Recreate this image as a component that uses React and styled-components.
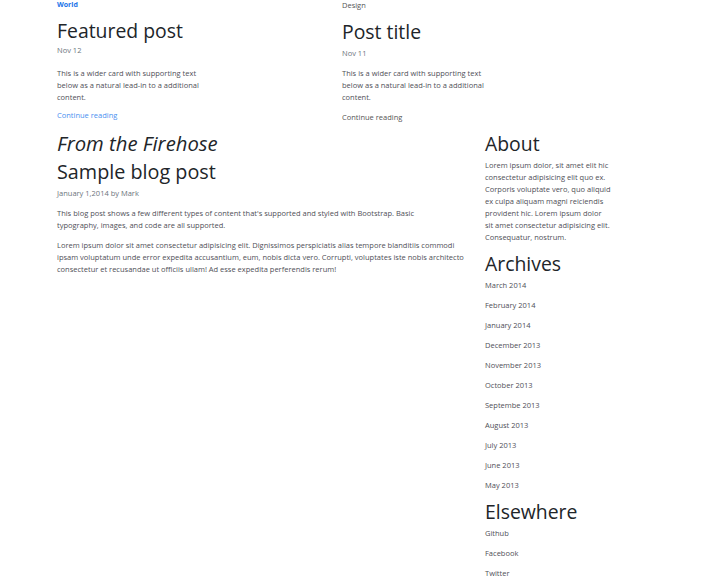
import React from "react";
import styled, { createGlobalStyle } from "styled-components";

const Global = createGlobalStyle`
  html, body { margin: 0; padding: 0; background: #fff; }
  body { font-family: "Open Sans", "Noto Sans", sans-serif; color: #212529; }
  * { box-sizing: border-box; }
`;

const Page = styled.div`
  padding: 0 0 0 57px;
  width: 713px;
`;

const TopRow = styled.div`
  display: grid;
  grid-template-columns: 285px 285px;
`;

const Card = styled.article`
  display: flex;
  flex-direction: column;
  align-items: flex-start;
  width: 160px;
`;

const Category = styled.a`
  font-size: ${(p) => (p.$strong ? "7px" : "7.5px")};
  line-height: ${(p) => (p.$strong ? "9px" : "10px")};
  font-weight: ${(p) => (p.$strong ? 700 : 400)};
  color: ${(p) => (p.$strong ? "#1a73e8" : "#555")};
  text-decoration: none;
`;

const CardTitle = styled.h3`
  margin: 9.5px 0 0;
  font-size: 19.4px;
  line-height: 23px;
  font-weight: 400;
  color: #212529;
  white-space: nowrap;
`;

const Meta = styled.div`
  margin-top: ${(p) => p.$mt ?? 4}px;
  font-size: 7.5px;
  line-height: 12px;
  color: #6c757d;
`;

const Text = styled.p`
  margin: ${(p) => p.$mt ?? 11}px 0 0;
  font-size: 7.5px;
  line-height: 12px;
  color: #4f4f57;
`;

const ReadMore = styled.a`
  margin-top: ${(p) => (p.$blue ? 6 : 8)}px;
  font-size: 7.5px;
  line-height: 12px;
  color: ${(p) => (p.$blue ? "#4a90f0" : "#555")};
  text-decoration: none;
`;

const BottomRow = styled.div`
  display: grid;
  grid-template-columns: 412px 132px;
  column-gap: 16px;
  margin-top: 9px;
  align-items: start;
`;

const Main = styled.main`
  display: flex;
  flex-direction: column;
`;

const SectionTitle = styled.h3`
  margin: 0;
  font-size: 20.3px;
  line-height: 23px;
  font-weight: 400;
  font-style: italic;
  color: #212529;
`;

const PostTitle = styled.h2`
  margin: 5px 0 0;
  font-size: 19.8px;
  line-height: 23px;
  font-weight: 400;
  color: #212529;
`;

const PostText = styled.p`
  margin: 8px 0 0;
  font-size: 7.5px;
  line-height: 12px;
  color: #4f4f57;
`;

const Sidebar = styled.aside`
  display: flex;
  flex-direction: column;
`;

const SideTitle = styled.h4`
  margin: ${(p) => (p.$first ? 0 : 9)}px 0 0;
  font-size: 19.4px;
  line-height: 23px;
  font-weight: 400;
  color: #212529;
`;

const SideText = styled.p`
  margin: 4px 0 0;
  font-size: 7.5px;
  line-height: 12px;
  color: #4f4f57;
`;

const LinkList = styled.ul`
  list-style: none;
  margin: 4px 0 0;
  padding: 0;
  display: flex;
  flex-direction: column;
  gap: 8px;
`;

const LinkItem = styled.li`
  font-size: 7.5px;
  line-height: 12px;
  color: #4f4f57;
`;

const Lines = ({ lines }) =>
  lines.map((l, i) => (
    <React.Fragment key={i}>
      {i > 0 && <br />}
      {l}
    </React.Fragment>
  ));

const archives = [
  "March 2014",
  "February 2014",
  "January 2014",
  "December 2013",
  "November 2013",
  "October 2013",
  "Septembe 2013",
  "August 2013",
  "July 2013",
  "June 2013",
  "May 2013",
];

const elsewhere = ["Github", "Facebook", "Twitter"];

const cardText =
  "This is a wider card with supporting text below as a natural lead-in to a additional content.";

export default function App() {
  return (
    <>
      <Global />
      <Page>
        <TopRow>
          <Card>
            <Category $strong>World</Category>
            <CardTitle>Featured post</CardTitle>
            <Meta $mt={2}>Nov 12</Meta>
            <Text>{cardText}</Text>
            <ReadMore $blue>Continue reading</ReadMore>
          </Card>
          <Card>
            <Category>Design</Category>
            <CardTitle>Post title</CardTitle>
            <Meta>Nov 11</Meta>
            <Text $mt={8}>{cardText}</Text>
            <ReadMore>Continue reading</ReadMore>
          </Card>
        </TopRow>
        <BottomRow>
          <Main>
            <SectionTitle>From the Firehose</SectionTitle>
            <PostTitle>Sample blog post</PostTitle>
            <Meta>January 1,2014 by Mark</Meta>
            <PostText>
              <Lines
                lines={[
                  "This blog post shows a few different types of content that's supported and styled with Bootstrap. Basic",
                  "typography, images, and code are all supported.",
                ]}
              />
            </PostText>
            <PostText>
              <Lines
                lines={[
                  "Lorem ipsum dolor sit amet consectetur adipisicing elit. Dignissimos perspiciatis alias tempore blanditiis commodi",
                  "ipsam voluptatum unde error expedita accusantium, eum, nobis dicta vero. Corrupti, voluptates iste nobis architecto",
                  "consectetur et recusandae ut officiis ullam! Ad esse expedita perferendis rerum!",
                ]}
              />
            </PostText>
          </Main>
          <Sidebar>
            <SideTitle $first>About</SideTitle>
            <SideText>
              <Lines
                lines={[
                  "Lorem ipsum dolor, sit amet elit hic",
                  "consectetur adipisicing elit quo ex.",
                  "Corporis voluptate vero, quo aliquid",
                  "ex culpa aliquam magni reiciendis",
                  "provident hic. Lorem ipsum dolor",
                  "sit amet consectetur adipisicing elit.",
                  "Consequatur, nostrum.",
                ]}
              />
            </SideText>
            <SideTitle>Archives</SideTitle>
            <LinkList>
              {archives.map((a) => (
                <LinkItem key={a}>{a}</LinkItem>
              ))}
            </LinkList>
            <SideTitle>Elsewhere</SideTitle>
            <LinkList>
              {elsewhere.map((a) => (
                <LinkItem key={a}>{a}</LinkItem>
              ))}
            </LinkList>
          </Sidebar>
        </BottomRow>
      </Page>
    </>
  );
}
